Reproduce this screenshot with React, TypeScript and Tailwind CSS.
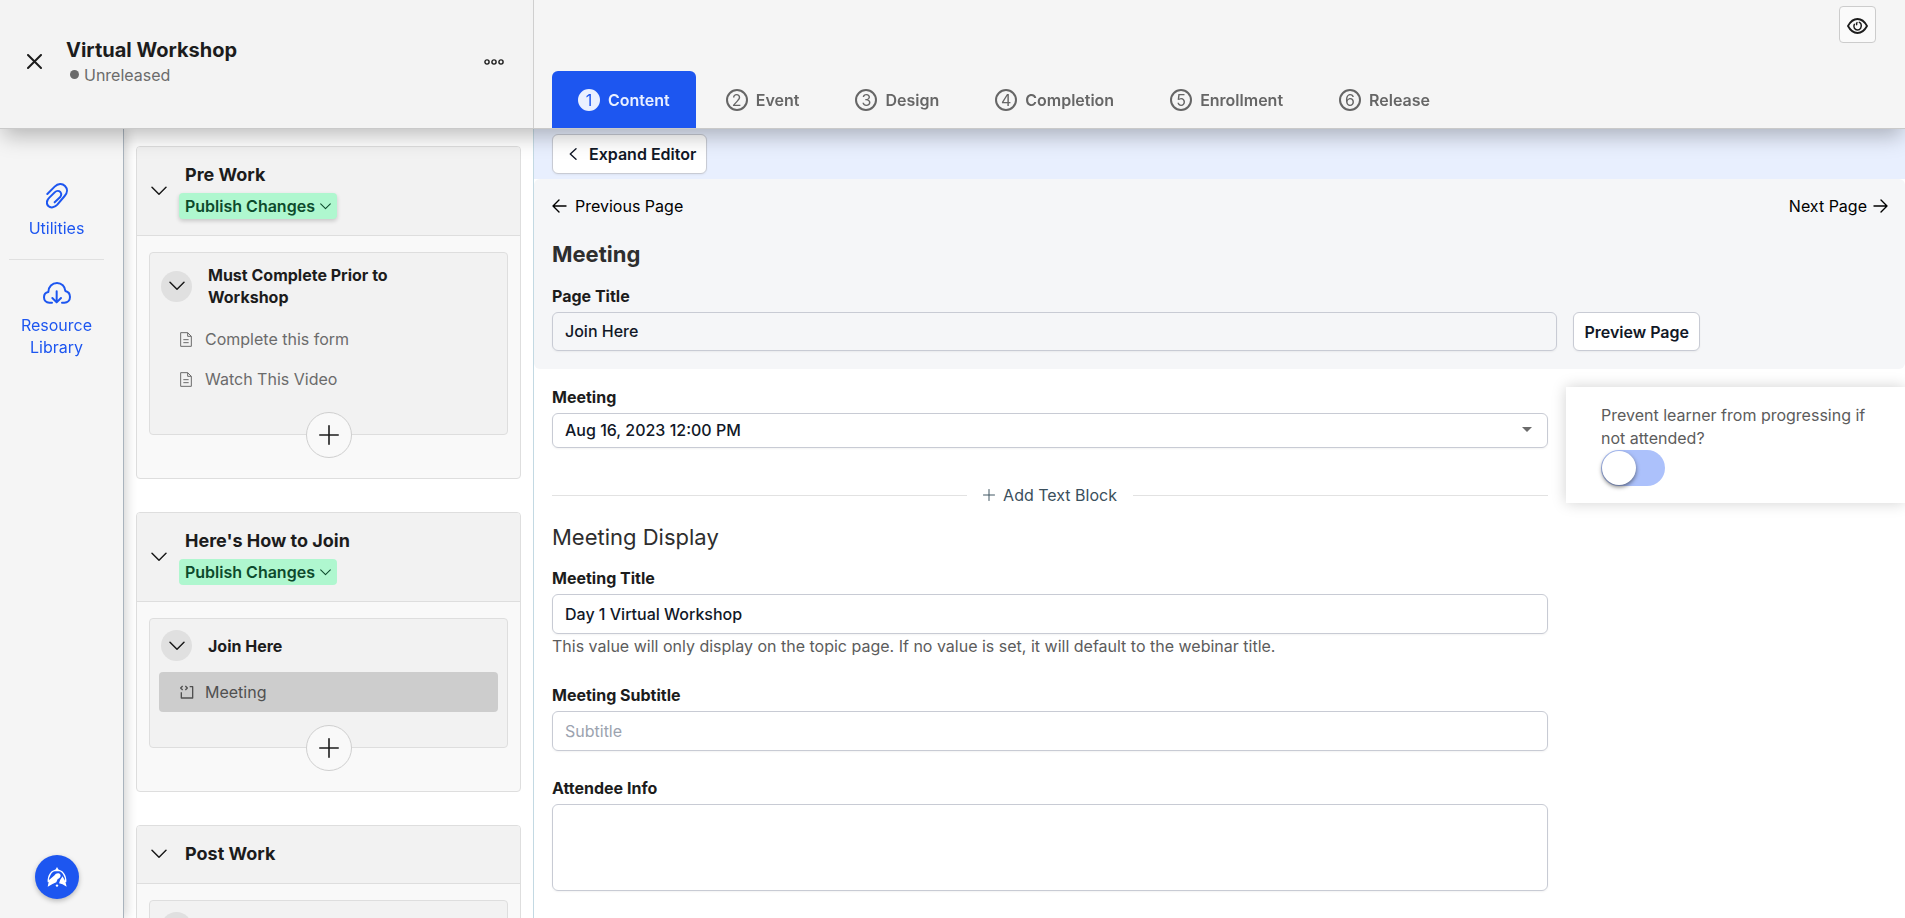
import { useState } from "react";
import type { ReactNode } from "react";

const tabs = ["Content", "Event", "Design", "Completion", "Enrollment", "Release"];

const sections = [
  {
    title: "Pre Work",
    publish: true,
    raised: true,
    groups: [
      {
        title: "Must Complete Prior to Workshop",
        pages: [
          { name: "Complete this form", type: "page" },
          { name: "Watch This Video", type: "page" },
        ],
      },
    ],
  },
  {
    title: "Here's How to Join",
    publish: true,
    raised: false,
    groups: [{ title: "Join Here", pages: [{ name: "Meeting", type: "meeting" }] }],
  },
  {
    title: "Post Work",
    publish: false,
    raised: false,
    groups: [{ title: "", pages: [] }],
  },
];

const fieldClass =
  "block w-full rounded-md border border-[#c8cbd4] bg-transparent px-3 pb-px text-base font-medium text-[#111827] shadow-xs placeholder:font-normal placeholder:text-[#9ca3af]";

const ChevronDown = ({ className }: { className: string }) => (
  <svg className={className} viewBox="0 0 16 10" fill="none" stroke="currentColor" strokeLinecap="round" strokeLinejoin="round">
    <path d="M1 1.2l7 7 7-7" strokeWidth="1.5" />
  </svg>
);

const PlusIcon = ({ className }: { className: string }) => (
  <svg className={className} viewBox="0 0 20 20" fill="none" stroke="currentColor" strokeLinecap="round">
    <path d="M10 .8v18.4M.8 10h18.4" strokeWidth="1.6" />
  </svg>
);

const PageIcon = () => (
  <svg className="h-[15px] w-3" viewBox="0 0 36 45" fill="none" stroke="currentColor" strokeWidth="3" strokeLinejoin="round">
    <path d="M2 2h21l11 11v30H2zM23 2v11h11M10 23h16M10 32h16" />
  </svg>
);

const MeetingIcon = () => (
  <svg className="h-[14px] w-[14px]" viewBox="0 0 42 42" fill="none" stroke="currentColor" strokeWidth="4" strokeLinejoin="round">
    <path d="M8 3L2 9l6 6M16 3l6 6-6 6M4 22v17h34V5h-9" />
  </svg>
);

const RailLink = ({ label, children }: { label: string; children: ReactNode }) => (
  <a href="#" className="flex flex-col items-center gap-[7px] px-4 text-center leading-[22px] text-[#1d56f0]">
    <span className="flex h-7 items-center">{children}</span>
    {label}
  </a>
);

const Rail = () => (
  <nav className="z-10 flex w-[124px] shrink-0 flex-col items-stretch border-r border-[#a9b3bd] bg-[#f5f5f5] pt-[53px] pr-[10px] pb-[19px] shadow-[3px_0_10px_rgba(0,0,0,0.16)]">
    <RailLink label="Utilities">
      <svg className="h-[26px] w-[22px]" viewBox="0 0 66 78" fill="none" stroke="currentColor" strokeWidth="6" strokeLinecap="round" strokeLinejoin="round">
        <path d="M4 33L26 11C36 1 49 1 57 9c8 8 8 20-1 30L34 65c-8 9-20 11-27 4-7-8-5-17 3-25l16-16c6-6 13-5 17-1 4 5 3 11-1 16L26 58" />
      </svg>
    </RailLink>
    <div className="mx-[9px] mt-5 mb-[19px] border-t border-[#e0e0e0]" />
    <RailLink label="Resource Library">
      <svg className="h-[22px] w-7" viewBox="0 0 84 66" fill="none" stroke="currentColor" strokeWidth="6" strokeLinecap="round" strokeLinejoin="round">
        <path d="M27 62h-8C9 62 3 55 3 46c0-9 6-15 13-16C16 14 28 3 42 3s24 10 25 24c9 2 14 9 14 18 0 10-7 17-17 17h-7" />
        <path d="M41 28v33M28 48l13 13 13-13" />
      </svg>
    </RailLink>
    <button
      aria-label="Launch assistant"
      className="mt-auto flex h-11 w-11 items-center justify-center self-center rounded-full bg-[#1d56f0] text-white shadow-[0_2px_5px_rgba(0,0,0,0.25)]"
    >
      <svg className="h-5 w-5" viewBox="0 0 56 58" fill="currentColor">
        <path d="M3 44C1 24 13 9 28 9s27 15 25 35" fill="none" stroke="currentColor" strokeWidth="4" />
        <path d="M28 0l7 12H21z" />
        <path d="M1 57l4-19 16-14c3-7 13-8 16-3 4 6-1 11-7 14l-4 9-11 5z" />
        <path d="M37 38l7-11 8 14 4 16-12-7-10-3z" />
        <circle cx="28" cy="54" r="3.5" />
      </svg>
    </button>
  </nav>
);

const Outline = () => (
  <aside className="flex w-[409px] shrink-0 flex-col gap-[33px] overflow-y-auto bg-white pt-[17px] pr-3 pl-3 [scrollbar-width:none]">
    {sections.map((section) => (
      <section key={section.title} className="shrink-0 overflow-hidden rounded border border-[#dedede] bg-[#f9f9f9]">
        <header className="flex items-center border-b border-[#dedede] bg-[#f2f2f2] pt-[15px] pb-4 pl-[14px]">
          <button aria-label={`Collapse ${section.title}`} className="mr-3">
            <ChevronDown className="h-[10px] w-4" />
          </button>
          <div>
            <h2 className="pl-[6px] text-lg leading-[26px] font-bold">{section.title}</h2>
            {section.publish && (
              <button
                className={`mt-[5px] flex h-[26px] items-center gap-[5px] rounded bg-[#aff7cf] pr-[6px] pl-[6px] font-semibold text-[#0d4a2c] ${
                  section.raised ? "shadow-[0_2px_4px_rgba(0,0,0,0.18)]" : ""
                }`}
              >
                Publish Changes
                <ChevronDown className="h-[7px] w-[11px]" />
              </button>
            )}
          </div>
        </header>

        {section.groups.map((group) => (
          <div key={group.title} className="mx-3 mt-4 mb-[43px] rounded border border-[#dedede] bg-[#f2f2f2] px-[9px] pt-[11px]">
            <div className="flex items-center gap-4 pl-[2px]">
              <button
                aria-label={`Collapse ${group.title || "group"}`}
                className="flex h-[31px] w-[31px] shrink-0 items-center justify-center rounded-full bg-[#e0e0e0]"
              >
                <ChevronDown className="h-[10px] w-4" />
              </button>
              <h3 className="max-w-[200px] leading-[22px] font-bold">{group.title}</h3>
            </div>
            <ul className="mt-[11px]">
              {group.pages.map((page) => (
                <li key={page.name}>
                  <a
                    href="#"
                    className={`flex h-10 items-center rounded pl-[21px] ${
                      page.type === "meeting" ? "bg-[#cdcdcd] text-[#505050]" : "text-[#6b6b6b]"
                    }`}
                  >
                    <span className="w-[25px]">{page.type === "meeting" ? <MeetingIcon /> : <PageIcon />}</span>
                    {page.name}
                  </a>
                </li>
              ))}
            </ul>
            <div className="mt-[13px] -mb-6 flex justify-center">
              <button
                aria-label={`Add page to ${group.title || "group"}`}
                className="flex h-[46px] w-[46px] items-center justify-center rounded-full border border-[#cfcfcf] bg-[#f9f9f9]"
              >
                <PlusIcon className="h-5 w-5" />
              </button>
            </div>
          </div>
        ))}
      </section>
    ))}
  </aside>
);

const Header = () => (
  <header className="z-20 flex h-[129px] shrink-0 border-b border-[#c9c9c9] bg-[#f5f5f5] shadow-[0_10px_20px_-3px_rgba(0,0,0,0.26)]">
    <div className="flex w-[534px] shrink-0 items-center border-r border-[#cfcfcf] bg-[#f3f3f3] pr-[29px] pb-[5px] pl-[27px]">
      <button aria-label="Close" className="mr-6">
        <svg className="h-[15px] w-[15px]" viewBox="0 0 15 15" fill="none" stroke="currentColor" strokeWidth="2" strokeLinecap="round">
          <path d="M1 1l13 13M14 1L1 14" />
        </svg>
      </button>
      <div>
        <h1 className="text-xl leading-[26px] font-bold">Virtual Workshop</h1>
        <p className="flex items-center gap-[5px] pl-1 leading-6 text-[#6b6b6b]">
          <span className="h-[9px] w-[9px] rounded-full bg-[#6b6b6b]" />
          Unreleased
        </p>
      </div>
      <button aria-label="More options" className="ml-auto">
        <svg className="h-[6px] w-5" viewBox="0 0 20 6" fill="none" stroke="currentColor" strokeWidth="1.4">
          <circle cx="3" cy="3" r="2.1" />
          <circle cx="10" cy="3" r="2.1" />
          <circle cx="17" cy="3" r="2.1" />
        </svg>
      </button>
    </div>

    <div className="flex grow flex-col justify-between pl-[18px]">
      <button
        aria-label="Preview"
        className="mt-[6px] mr-[29px] flex h-[37px] w-[37px] items-center justify-center self-end rounded border border-[#cccccc] bg-[#fafafa]"
      >
        <svg className="mt-[2px] h-4 w-[21px]" viewBox="0 0 63 48" fill="none" stroke="currentColor" strokeWidth="5.5" strokeLinecap="round">
          <path d="M3 24C10 11 20 3 31.500 3S53 11 60 24C53 37 43 45 31.500 45S10 37 3 24z" />
          <path d="M22 19c-4 8 1 17 9.500 17S45 27 42 18c-1-2-3-4-5-5M30 14c-2 2-2 4-1 6" strokeWidth="4.500" />
        </svg>
      </button>
      <nav className="flex gap-1">
        {tabs.map((tab, i) => (
          <a
            key={tab}
            href="#"
            className={`flex h-[57px] items-center gap-2 rounded-t-md px-[26px] font-semibold ${
              i === 0 ? "bg-[#1d56f0] text-[#eaf0ff]" : "text-[#666666]"
            }`}
          >
            <span
              className={`flex h-[22px] w-[22px] items-center justify-center rounded-full border-2 leading-none font-normal ${
                i === 0 ? "border-[#eaf0ff] bg-[#eaf0ff] text-[#1d56f0]" : "border-[#666666]"
              }`}
            >
              {i + 1}
            </span>
            {tab}
          </a>
        ))}
      </nav>
    </div>
  </header>
);

const Editor = () => {
  const [prevent, setPrevent] = useState(false);

  return (
    <main className="min-w-0 grow overflow-x-hidden overflow-y-auto border-l border-[#c3d9e3] bg-white [scrollbar-width:none]">
      <div className="bg-[#e8effe] pt-[5px] pb-[5px] pl-[18px]">
        <button className="flex h-10 items-center gap-3 rounded-md border border-[#c8cbd4] bg-white pr-[10px] pl-4 font-semibold text-[#111827] shadow-xs">
          <svg className="h-3 w-2" viewBox="0 0 8 12" fill="none" stroke="currentColor" strokeWidth="1.4" strokeLinecap="round" strokeLinejoin="round">
            <path d="M7 .8L1.300 6 7 11.200" />
          </svg>
          Expand Editor
        </button>
      </div>

      <div className="rounded-md bg-[#f5f6f8] pt-[15px] pr-[17px] pb-[18px] pl-[18px]">
        <div className="flex justify-between text-black">
          <a href="#" className="flex items-center gap-2">
            <svg className="h-[14px] w-[15px]" viewBox="0 0 15 14" fill="none" stroke="currentColor" strokeWidth="1.4" strokeLinecap="round" strokeLinejoin="round">
              <path d="M14 7H1M7 1L1 7l6 6" />
            </svg>
            Previous Page
          </a>
          <a href="#" className="flex items-center gap-[6px]">
            Next Page
            <svg className="h-[14px] w-[15px]" viewBox="0 0 15 14" fill="none" stroke="currentColor" strokeWidth="1.4" strokeLinecap="round" strokeLinejoin="round">
              <path d="M1 7h13M8 1l6 6-6 6" />
            </svg>
          </a>
        </div>
        <h2 className="mt-[22px] text-[22px] leading-7 font-bold text-[#2e2e2e]">Meeting</h2>
        <label htmlFor="page-title" className="mt-4 mb-1 block font-bold">
          Page Title
        </label>
        <div className="flex gap-4 pr-[188px]">
          <input id="page-title" className={`${fieldClass} h-[39px]`} defaultValue="Join Here" />
          <button className="h-[39px] shrink-0 rounded-md border border-[#c8cbd4] bg-white px-[10px] font-semibold text-[#111827] shadow-xs">
            Preview Page
          </button>
        </div>
      </div>

      <div className="flex items-start gap-[18px] pl-[18px]">
        <form className="min-w-0 grow pt-4 pb-7">
          <label htmlFor="meeting" className="mb-1 block font-bold">
            Meeting
          </label>
          <div className="relative">
            <select id="meeting" className={`${fieldClass} h-[35px] appearance-none`}>
              <option>Aug 16, 2023 12:00 PM</option>
            </select>
            <svg className="pointer-events-none absolute top-[14px] right-4 h-[5px] w-[10px] text-[#6b6b6b]" viewBox="0 0 10 5" fill="currentColor">
              <path d="M0 0h10L5 5z" />
            </svg>
          </div>

          <div className="mt-[35px] flex items-center text-[#3a4f5c]">
            <span className="grow border-t border-[#e2e2e2]" />
            <button type="button" className="flex items-center gap-2 px-4">
              <PlusIcon className="h-3 w-3" />
              Add Text Block
            </button>
            <span className="grow border-t border-[#e2e2e2]" />
          </div>

          <h2 className="mt-4 text-[22px] leading-7 text-[#2e2e2e]">Meeting Display</h2>

          <label htmlFor="meeting-title" className="mt-[15px] mb-1 block font-bold">
            Meeting Title
          </label>
          <input id="meeting-title" className={`${fieldClass} h-10`} defaultValue="Day 1 Virtual Workshop" />
          <p className="text-[#5c5c5c]">
            This value will only display on the topic page. If no value is set, it will default to the webinar title.
          </p>

          <label htmlFor="meeting-subtitle" className="mt-[25px] mb-1 block font-bold">
            Meeting Subtitle
          </label>
          <input id="meeting-subtitle" className={`${fieldClass} h-10`} placeholder="Subtitle" />

          <label htmlFor="attendee-info" className="mt-[25px] mb-1 block font-bold">
            Attendee Info
          </label>
          <textarea id="attendee-info" className={`${fieldClass} h-[87px] resize-none`} />
        </form>

        <aside className="mt-[18px] w-[339px] shrink-0 bg-white pt-[17px] pr-9 pb-[17px] pl-[35px] shadow-[0_0_14px_rgba(0,0,0,0.18)]">
          <label className="block leading-[23px] text-[#5c5c5c]">
            Prevent learner from progressing if not attended?
            <input type="checkbox" className="peer sr-only" checked={prevent} onChange={() => setPrevent(!prevent)} />
            <span className="flex h-9 w-16 items-center rounded-full bg-[#acc1fb] p-px peer-checked:justify-end peer-checked:bg-[#1d56f0]">
              <span className="h-[34px] w-[34px] rounded-full bg-white shadow-[0_2px_4px_rgba(0,0,0,0.5)]" />
            </span>
          </label>
        </aside>
      </div>
    </main>
  );
};

export default function App() {
  return (
    <div className="flex h-screen flex-col overflow-hidden font-['Inter',sans-serif] text-base text-[#1c1c1c]">
      <Header />
      <div className="flex min-h-0 grow">
        <Rail />
        <Outline />
        <Editor />
      </div>
    </div>
  );
}
